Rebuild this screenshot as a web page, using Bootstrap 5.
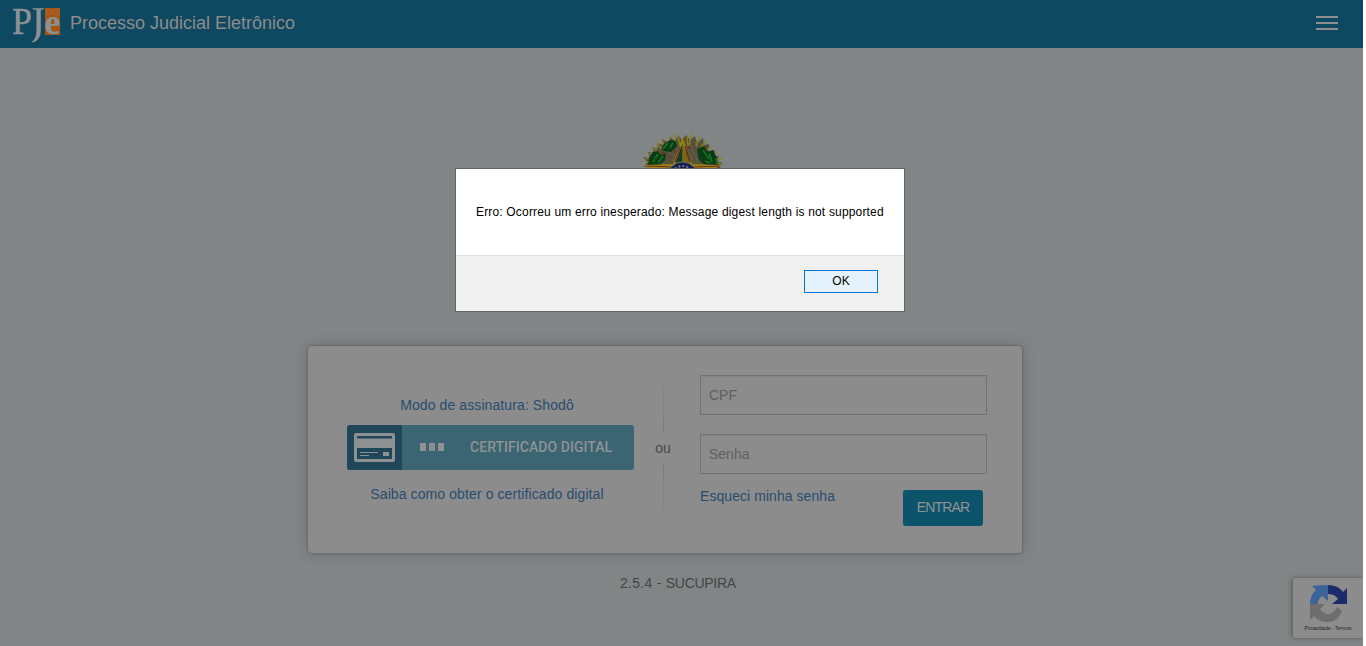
<!DOCTYPE html>
<html lang="pt-BR">
<head>
<meta charset="utf-8">
<meta name="viewport" content="width=device-width, initial-scale=1">
<title>Processo Judicial Eletrônico</title>
<link href="https://cdn.jsdelivr.net/npm/bootstrap@5.3.0/dist/css/bootstrap.min.css" rel="stylesheet">
<style>
body{background:#fff;font:14px/20px "Liberation Sans",Arial,sans-serif;color:#494949;overflow:hidden}
a{color:#284d6f;text-decoration:none}
.page{width:1363px;height:646px;background:#818586}
.topbar{height:48px;background:#0f4861;padding:0 25px 0 11px}
.brand-text{font-size:18px;line-height:24px;color:#8c8c8c;margin:-2px 0 0 7px}
.menu-icon{margin-top:-2px}
.crest{width:82px;height:40px;margin:84px 0 0 643px}
.login{width:714px;height:207px;margin:174px 0 0 308px;padding:29px 35px 0 39px;background:#8c8c8c;border-radius:4px;box-shadow:0 0 3px rgba(0,0,0,.3),0 0 13px rgba(60,60,65,.3)}
.cert-col{width:287px;padding-top:20px}
.cert-col a.hint{display:block;width:280px;text-align:center;letter-spacing:.1px}
.cert{height:45px;margin:10px 0 14px;padding:0;border:0;border-radius:3px;overflow:hidden;background:#3b6573;color:#8f9393;width:287px}
.cert-icon{width:55px;height:45px;background:#20465a}
.dots{gap:3px;margin:-1px 0 0 18px}
.dots i{width:6px;height:8px;background:#8f9090}
.cert-label{font:500 14px/20px Roboto,sans-serif;margin:-1px 0 0 26px;letter-spacing:.04px}
.divide{width:20px;margin-left:19px;height:156px;margin-top:-4px}
.divide span{line-height:20px;margin:6px 0}
.rule-a,.rule-b{width:1px;height:61px}
.rule-a{background:linear-gradient(#8c8c8c,#7c7c7c)}
.rule-b{background:linear-gradient(#7c7c7c,#8c8c8c);height:64px}
.form-col{width:287px;margin-left:27px}
.field{height:40px;border:1px solid #727272;border-radius:0;background:#8c8c8c;padding:0 8px;font-size:14px;margin-bottom:19px;box-shadow:inset 0 1px 1px rgba(0,0,0,.06)}
.field::placeholder{color:#606060}
.forgot{margin-top:-7px;letter-spacing:.06px}
.enter{width:80px;height:36px;border:0;border-radius:3px;background:#0d536a;color:#8f9393;font-size:14px;letter-spacing:-.85px;padding:0 0 2px;line-height:32px;margin:-3px 4px 0 0}
.version{margin-top:20px;padding-left:620px;color:#434546;letter-spacing:-.3px}
.version span{letter-spacing:.28px}
.alert-box{left:455px;top:168px;width:450px;height:144px;border:1px solid #626565;background:#f1f1f1;color:#000;font-size:12px;line-height:16px;z-index:3}
.alert-msg{height:87px;border-bottom:1px solid #dfdfdf;background:#fff;padding:35px 0 0 20px;white-space:nowrap}
.alert-msg span{letter-spacing:.17px}
.ok{width:74px;height:23px;margin:14px 26px 0 auto;border:1px solid #0078d7;border-radius:0;background:#e5f1fb;font-size:12px;line-height:20px;padding:0 0 1px;color:#000}
.captcha{left:1293px;top:578px;width:70px;height:60px;background:#8c8c8c;border-radius:2px 0 0 2px;box-shadow:-1px 0 5px #565656;clip-path:inset(-8px 0 -8px -8px);color:#222}
.captcha svg{margin-top:6px}
.captcha small{font:5px/7px "Liberation Sans",sans-serif;white-space:nowrap;margin-top:1px}
</style>
</head>
<body>
<main class="page position-relative">
  <nav class="topbar d-flex align-items-center justify-content-between">
    <div class="d-flex align-items-center">
      <svg width="52" height="48" viewBox="0 0 52 48" font-family="Liberation Serif,serif" fill="#8c9293">
        <rect x="34" y="8" width="15" height="27" fill="#a85513"/>
        <path d="M36 10h5v4h-5zM43 9h5v5h-5z" fill="none" stroke="#b56b30" stroke-width=".7"/>
        <text x="1" y="34" font-size="38" textLength="20" lengthAdjust="spacingAndGlyphs" stroke="#8c9293" stroke-width=".4">P</text>
        <path d="M21.500 8.300h11.500v1l-3.200.8v20.400q0 9.500-8 12l-.8-.9q4.500-2.600 4.500-11.600V10.100l-4-.8z"/>
        <text x="33.500" y="34" font-size="35" font-weight="bold" textLength="16" lengthAdjust="spacingAndGlyphs">e</text>
      </svg>
      <span class="brand-text">Processo Judicial Eletrônico</span>
    </div>
    <svg class="menu-icon" width="22" height="14" viewBox="0 0 22 14"><path d="M0 1h22M0 7h22M0 13h22" stroke="#8f8d8d" stroke-width="2"/></svg>
  </nav>

  <svg class="crest d-block" viewBox="0 0 82 40">
    <path d="M1 35l3-5-4-5 7 1-2-6 6 1-2-6 6 2-1-6 6 2-1-6 7 4 1-6 5 4 3-6 4 5 4-5 4 5 5-4 2 7 6-5 1 7 5-1 0 7 6-1-2 6 6 0-3 5 7 2-4 3 3 3z" fill="#55513a"/>
    <path d="M3 31l8-5M2 26l10 3M6 21l7 5M10 16l7 6M14 11l6 8M18 7l6 9M26 5l2 8M32 2l1 10M35 4l2 9M44 4l1 10M49 2l-3 11M57 4l-4 10M63 9l-6 8M68 15l-8 6M74 20l-9 6M79 27l-10 2M78 32l-9-2" stroke="#8e8217" stroke-width="1.300"/>
    <path d="M25 16l5 13M28 14l4 12M47 11l8 20M52 10l7 20M46 18l5 13" stroke="#817d6c" stroke-dasharray="1 1.500"/>
    <path d="M5 33l1-7 4-6 5-1 3 4 5-2-1 7-6 5zM18 18l3-6 6-4 6 1 1 5-6 6-7-1zM54 17l7-3 4 6 5-2 4 8 1 7H62l-6-5z" fill="#0b3a17"/>
    <path d="M10 30l5-8M15 31l5-7M20 17l5-6M26 17l4-6M60 18l6 9M66 21l3 9M62 29l5 2M73 26l1 6" stroke="#15751f" stroke-width="1.800"/>
    <path d="M12 26l3 5M24 14l4 3M62 18l4 4M69 26l3 4" stroke="#082b12"/>
    <path d="M18 20l3 2M30 19l2 2M45 15l3 2M27 24l2 2" stroke="#69372f" stroke-width="1.800"/>
    <path d="M39.500 5l9.500 27 30 1-12 6H12L1 33l29-1z" fill="#988515"/>
    <path d="M39.500 11v20h-7z" fill="#103f25"/><path d="M39.500 11v20h7z" fill="#7e6419"/><path d="M43 18l4 12" stroke="#15462a" stroke-width="1.300"/>
    <path d="M37 15l-5 15M42 14l5 16M4 34l26 1M77 34l-26 1" stroke="#7d2719" stroke-width="1.200"/>
    <circle cx="39.500" cy="46" r="16" fill="#171e4a" stroke="#73756e"/>
    <circle cx="39.500" cy="46" r="12" fill="none" stroke="#777b86" stroke-width="2" stroke-dasharray="2 2"/>
  </svg>

  <section class="login d-flex">
    <div class="cert-col">
      <a class="hint" href="#">Modo de assinatura: Shodô</a>
      <button class="cert btn d-flex align-items-center" type="button">
        <span class="cert-icon d-flex align-items-center justify-content-center">
          <svg width="41" height="29" viewBox="0 0 41 29"><rect width="41" height="29" rx="2" fill="#8e9192"/><path d="M3 3h35v2.500H3zM3 15h35v11H3z" fill="#20465a"/><path d="M6 19.500h18M6 22.500h9" stroke="#8e9192"/><path d="M29 19h6v4h-6z" fill="#8e9192"/></svg>
        </span>
        <span class="dots d-flex"><i></i><i></i><i></i></span>
        <span class="cert-label">CERTIFICADO DIGITAL</span>
      </button>
      <a class="hint" href="#">Saiba como obter o certificado digital</a>
    </div>
    <div class="divide d-flex flex-column align-items-center"><div class="rule-a"></div><span>ou</span><div class="rule-b"></div></div>
    <form class="form-col">
      <input class="field form-control" placeholder="CPF">
      <input class="field form-control" type="password" placeholder="Senha">
      <div class="d-flex justify-content-between align-items-start"><a class="forgot" href="#">Esqueci minha senha</a><button class="enter btn" type="button">ENTRAR</button></div>
    </form>
  </section>
  <div class="version"><span>2.5.4 - </span>SUCUPIRA</div>

  <div class="alert-box position-absolute" role="alertdialog">
    <div class="alert-msg"><span>Erro: Ocorreu um erro inesperado: Message digest length is not supported</span></div>
    <button class="ok btn d-block" type="button">OK</button>
  </div>

  <aside class="captcha position-absolute d-flex flex-column align-items-center">
    <svg width="40" height="40" viewBox="0 0 40 40">
      <path d="M20 1q10 0 15 7l4-4v16H24l6-5q-3-5-10-5z" fill="#1b2b6c"/>
      <path d="M20 1v16l-6-5q-4 3-4 8H2Q2 11 8 6L4 2q8-1 16-1z" fill="#3d639b"/>
      <path d="M2 20h15l-5 5q3 5 9 5 5 0 8-7l5 4q-4 11-14 11-9 0-14-6l-4 4z" fill="#6e6e6e"/>
    </svg>
    <small>Privacidade - Termos</small>
  </aside>
</main>
<script src="https://cdn.jsdelivr.net/npm/bootstrap@5.3.0/dist/js/bootstrap.bundle.min.js"></script>
</body>
</html>
